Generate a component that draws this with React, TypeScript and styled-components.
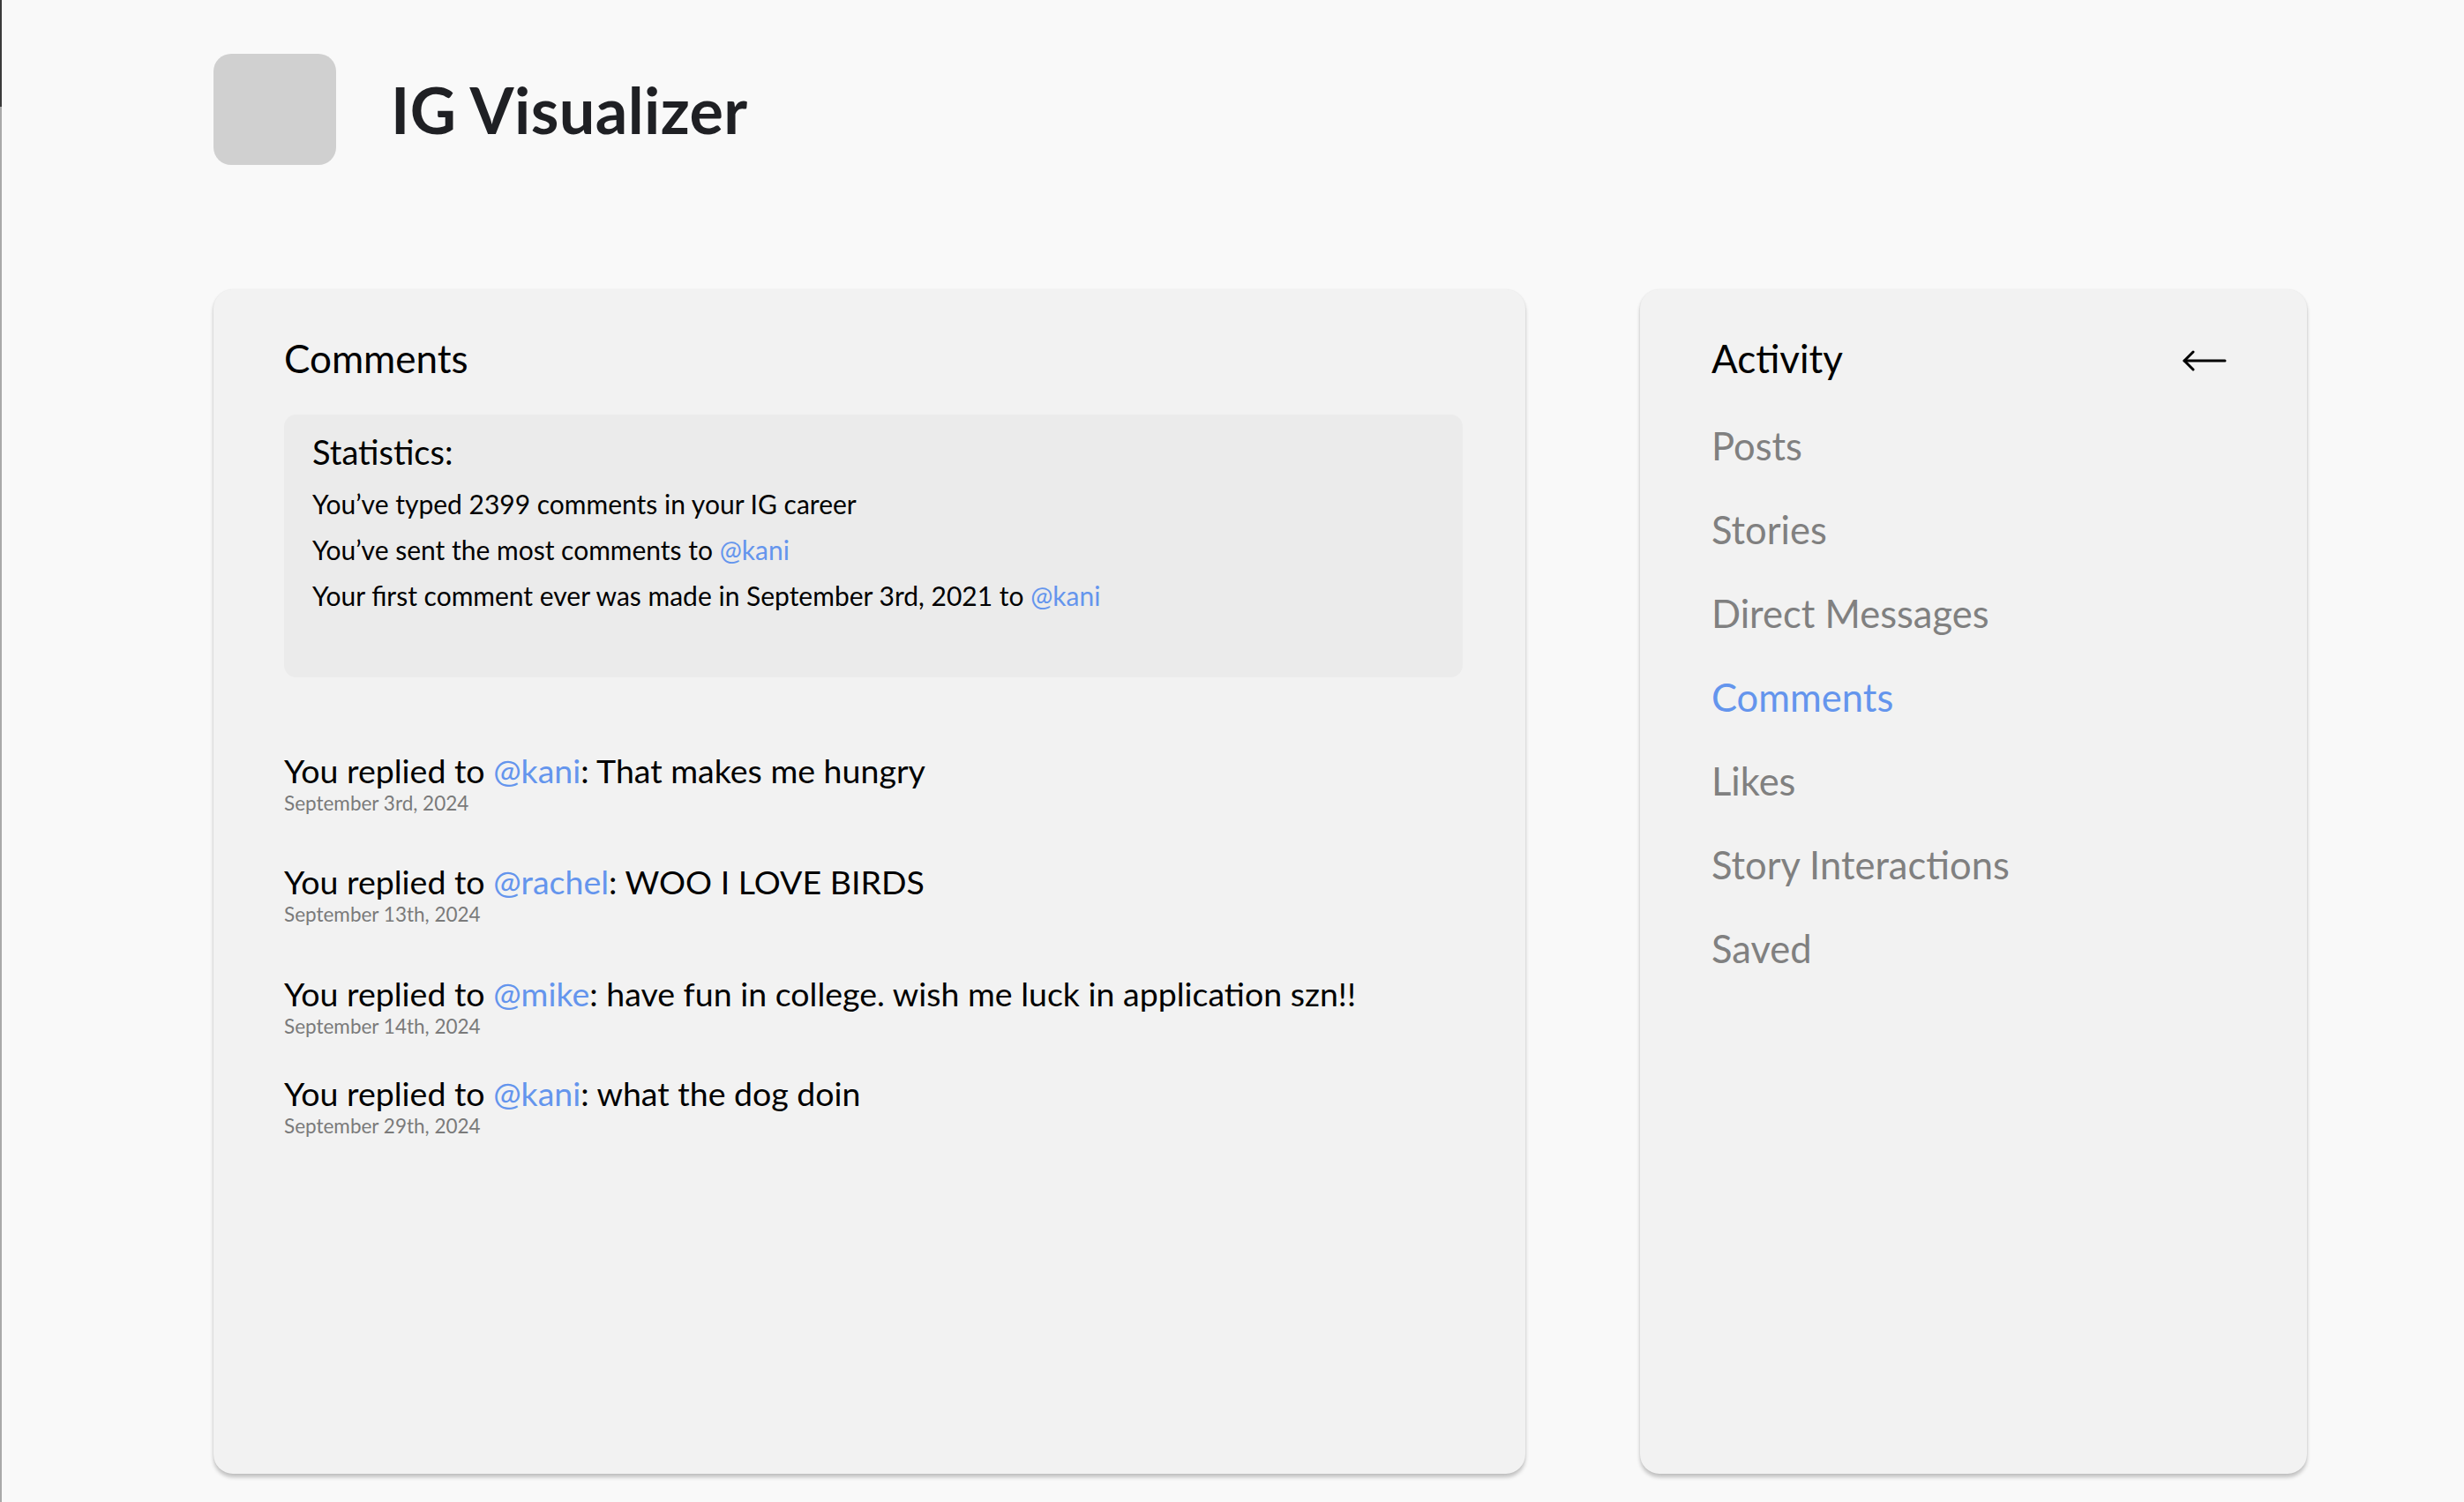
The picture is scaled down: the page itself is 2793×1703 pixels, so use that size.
import React from 'react';
import styled, { createGlobalStyle } from 'styled-components';

const GlobalStyle = createGlobalStyle`
    html, body {
        margin: 0;
        padding: 0;
        background: #f9f9f9;
    }

    body {
        font-family: Lato, "Open Sans", sans-serif;
        color: #000;
    }
`;

const StyledPage = styled.div`
    min-height: 1703px;
    box-sizing: border-box;
    padding: 61px 0 0 240px;
    border-left: 2px solid #a9a9a9;
    border-image: linear-gradient(to bottom, #3a3a3a 0, #3a3a3a 122px, #a9a9a9 122px) 1;
`;

const StyledHeader = styled.header`
    display: flex;
    align-items: center;
    gap: 62px;
`;

const StyledLogo = styled.div`
    width: 139px;
    height: 126px;
    border-radius: 20px;
    background: #d0d0d0;
`;

const StyledTitle = styled.h1`
    margin: 0;
    font-size: 72px;
    font-weight: 700;
    line-height: 1.2;
    color: #1f2024;
    letter-spacing: 0.4px;
`;

const StyledMain = styled.main`
    display: flex;
    gap: 130px;
    margin-top: 141px;
`;

const StyledCard = styled.section<{ $width: number }>`
    width: ${({ $width }) => $width}px;
    height: 1343px;
    box-sizing: border-box;
    background: #f2f2f2;
    border-radius: 22px;
    box-shadow: 0 4px 4px rgba(0, 0, 0, 0.22), 0 0 2px rgba(0, 0, 0, 0.08);
    padding: 52px 71px 0 80px;
    display: flex;
    flex-direction: column;
`;

const StyledNavCard = styled(StyledCard)`
    padding: 52px 91px 0 81px;
`;

const StyledCardTitle = styled.h2`
    margin: 0;
    font-size: 44px;
    font-weight: 400;
    line-height: 53px;
    color: #000;
`;

const StyledStats = styled.div`
    margin-top: 37px;
    height: 298px;
    box-sizing: border-box;
    padding: 19px 30px 0 32px;
    background: #ebebeb;
    border-radius: 14px;
`;

const StyledStatsTitle = styled.div`
    font-size: 38px;
    line-height: 46px;
    margin-bottom: 10px;
`;

const StyledStatLine = styled.div`
    font-size: 30px;
    line-height: 52px;
`;

const StyledHandle = styled.span`
    color: #6495ed;
`;

const StyledCommentList = styled.div`
    display: flex;
    flex-direction: column;
    margin-top: 83px;
`;

const StyledComment = styled.div<{ $gap: number }>`
    margin-top: ${({ $gap }) => $gap}px;
`;

const StyledCommentText = styled.div`
    font-size: 37.5px;
    line-height: 45px;
`;

const StyledCommentDate = styled.div`
    margin-top: 1px;
    font-size: 22.5px;
    line-height: 27px;
    color: #7a7a7a;
`;

const StyledNavHeader = styled.div`
    display: flex;
    align-items: center;
    justify-content: space-between;
`;

const StyledBackButton = styled.button`
    border: none;
    background: none;
    padding: 0;
    display: flex;
    cursor: pointer;
    margin-top: 5px;
`;

const StyledNavList = styled.nav`
    display: flex;
    flex-direction: column;
    gap: 43px;
    margin-top: 46px;
`;

const StyledNavItem = styled.a<{ $active?: boolean }>`
    font-size: 43.5px;
    line-height: 52px;
    color: ${({ $active }) => ($active ? '#6495ed' : '#808080')};
    text-decoration: none;
    cursor: pointer;
`;

const comments = [
    { handle: 'kani', text: 'That makes me hungry', date: 'September 3rd, 2024', gap: 0 },
    { handle: 'rachel', text: 'WOO I LOVE BIRDS', date: 'September 13th, 2024', gap: 53 },
    { handle: 'mike', text: 'have fun in college. wish me luck in application szn!!', date: 'September 14th, 2024', gap: 54 },
    { handle: 'kani', text: 'what the dog doin', date: 'September 29th, 2024', gap: 40 },
];

const navItems = ['Posts', 'Stories', 'Direct Messages', 'Comments', 'Likes', 'Story Interactions', 'Saved'];

const BackArrow = () => (
    <svg width="50" height="24" viewBox="0 0 50 24" fill="none" stroke="#000" strokeWidth="3" strokeLinecap="round" strokeLinejoin="round">
        <path d="M48 12H2" />
        <path d="M12 2L2 12l10 10" />
    </svg>
);

const App = () => {
    const [active, setActive] = React.useState('Comments');

    return (
        <>
            <GlobalStyle />
            <StyledPage>
                <StyledHeader>
                    <StyledLogo />
                    <StyledTitle>IG Visualizer</StyledTitle>
                </StyledHeader>
                <StyledMain>
                    <StyledCard $width={1487}>
                        <StyledCardTitle>Comments</StyledCardTitle>
                        <StyledStats>
                            <StyledStatsTitle>Statistics:</StyledStatsTitle>
                            <StyledStatLine>You’ve typed 2399 comments in your IG career</StyledStatLine>
                            <StyledStatLine>You’ve sent the most comments to <StyledHandle>@kani</StyledHandle></StyledStatLine>
                            <StyledStatLine>Your first comment ever was made in September 3rd, 2021 to <StyledHandle>@kani</StyledHandle></StyledStatLine>
                        </StyledStats>
                        <StyledCommentList>
                            {comments.map((c, i) => (
                                <StyledComment key={i} $gap={c.gap}>
                                    <StyledCommentText>
                                        You replied to <StyledHandle>@{c.handle}</StyledHandle>: {c.text}
                                    </StyledCommentText>
                                    <StyledCommentDate>{c.date}</StyledCommentDate>
                                </StyledComment>
                            ))}
                        </StyledCommentList>
                    </StyledCard>
                    <StyledNavCard $width={756}>
                        <StyledNavHeader>
                            <StyledCardTitle>Activity</StyledCardTitle>
                            <StyledBackButton aria-label="Back"><BackArrow /></StyledBackButton>
                        </StyledNavHeader>
                        <StyledNavList>
                            {navItems.map((item) => (
                                <StyledNavItem key={item} $active={item === active} onClick={() => setActive(item)}>
                                    {item}
                                </StyledNavItem>
                            ))}
                        </StyledNavList>
                    </StyledNavCard>
                </StyledMain>
            </StyledPage>
        </>
    );
};

export default App;
